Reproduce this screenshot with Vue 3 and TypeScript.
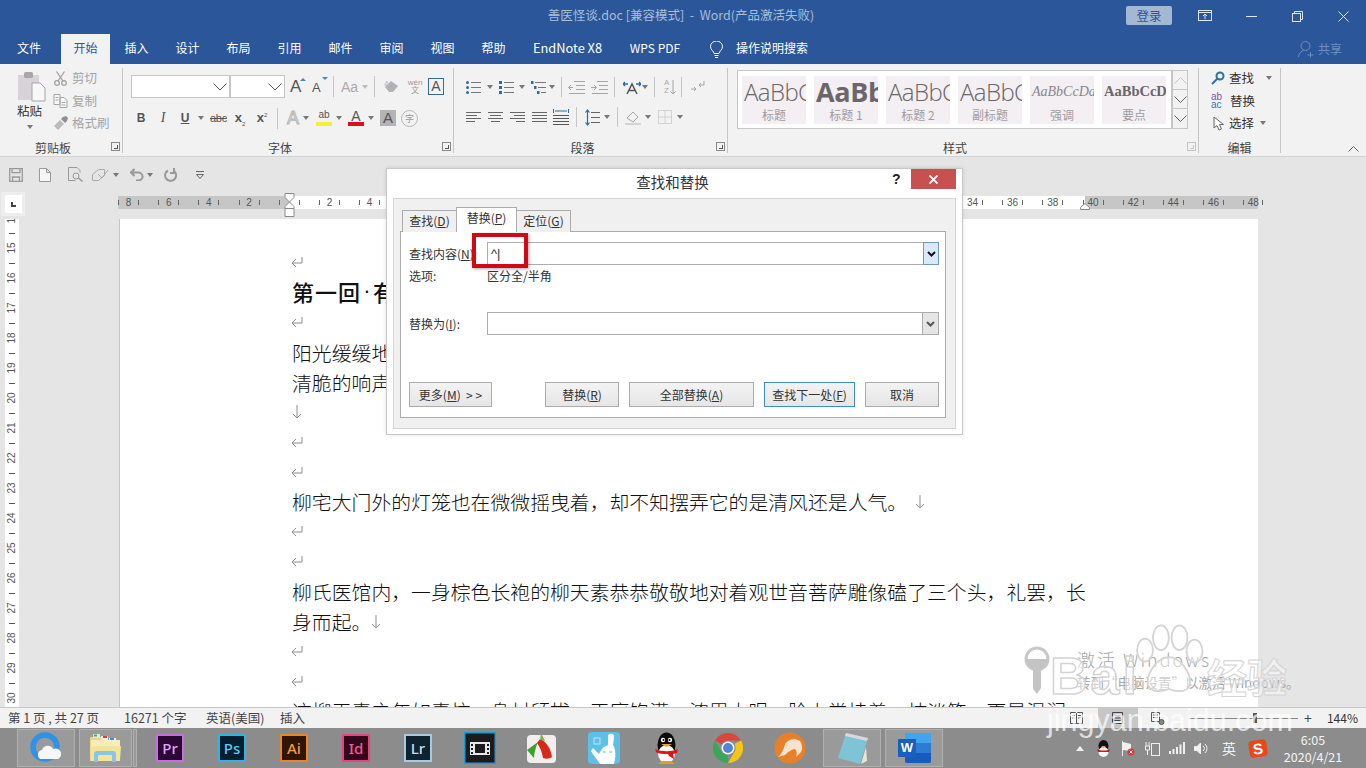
<script setup lang="ts">
const tabs = ['插入', '设计', '布局', '引用', '邮件', '审阅', '视图', '帮助']
const styles = [
  { sample: 'AaBbC', name: '标题', cls: 'sLight' },
  { sample: 'AaBb', name: '标题 1', cls: 'sBold' },
  { sample: 'AaBbC', name: '标题 2', cls: 'sLight' },
  { sample: 'AaBbC', name: '副标题', cls: 'sLight' },
  { sample: 'AaBbCcDd', name: '强调', cls: 'sItalic' },
  { sample: 'AaBbCcD', name: '要点', cls: 'sSerif' },
]
const rulerNums = ['8', '6', '4', '2', '', ...Array.from({ length: 24 }, (_, i) => String((i + 1) * 2))]
const vNums = Array.from({ length: 17 }, (_, i) => String(i + 14))
type Line = { text?: string; mark?: 'ret' | 'down'; bold?: boolean }
const lines: Line[] = [
  { mark: 'ret' },
  { bold: true },
  { mark: 'ret' },
  { text: '阳光缓缓地' },
  { text: '清脆的响声' },
  { mark: 'down' },
  { mark: 'ret' },
  { mark: 'ret' },
  { text: '柳宅大门外的灯笼也在微微摇曳着，却不知摆弄它的是清风还是人气。', mark: 'down' },
  { mark: 'ret' },
  { mark: 'ret' },
  { text: '柳氏医馆内，一身棕色长袍的柳天素恭恭敬敬地对着观世音菩萨雕像磕了三个头，礼罢，长' },
  { text: '身而起。', mark: 'down' },
  { mark: 'ret' },
  { mark: 'ret' },
  { text: '这柳天素之年如素抗，身材颀拔，天庭饱满，浓眉大眼，脸上常挂着一抹淡笑，更是温润' },
]
const tiles = [
  { t: 'Pr', c: 'pr' },
  { t: 'Ps', c: 'ps' },
  { t: 'Ai', c: 'ai' },
  { t: 'Id', c: 'id' },
  { t: 'Lr', c: 'lr' },
]
</script>

<template>
  <div class="app">
    <header class="titlebar">
      <div class="title">善医怪谈.doc [兼容模式]&nbsp; -&nbsp; Word(产品激活失败)</div>
      <div class="login">登录</div>
      <div class="winbtn">
        <svg width="14" height="12" viewBox="0 0 14 12" fill="none" stroke="#dfe7f2"><rect x=".5" y=".5" width="13" height="10" /><path d="M.5 2.500h13M7 9V4.500M5 6l2-2 2 2" /></svg>
      </div>
      <div class="winbtn">
        <svg width="11" height="11" viewBox="0 0 11 11" stroke="#dfe7f2"><path d="M0 5.500h11" /></svg>
      </div>
      <div class="winbtn">
        <svg width="11" height="11" viewBox="0 0 11 11" fill="none" stroke="#dfe7f2"><rect x=".5" y="2.500" width="8" height="8" /><path d="M2.500 2.500v-2h8v8h-2" /></svg>
      </div>
      <div class="winbtn">
        <svg width="11" height="11" viewBox="0 0 11 11" stroke="#dfe7f2"><path d="M.5.5l10 10M10.500.5l-10 10" /></svg>
      </div>
    </header>

    <nav class="tabs">
      <div class="tab tabFile">文件</div>
      <div class="tab tabActive">开始</div>
      <div v-for="t in tabs" :key="t" class="tab">{{ t }}</div>
      <div class="tabText endnote">EndNote X8</div>
      <div class="tabText wps">WPS PDF</div>
      <svg class="bulb" width="13" height="17" viewBox="0 0 13 17" fill="none" stroke="#fff"><path d="M4 12.500c0-2-3.500-3.500-3.500-7a6 5.500 0 0 1 12 0c0 3.500-3.500 5-3.500 7zM4.500 14.500h4M5 16.500h3" /></svg>
      <div class="tabText searchTip">操作说明搜索</div>
      <div class="share">
        <svg width="17" height="17" viewBox="0 0 17 17" fill="none" stroke="#6f8fbd"><circle cx="7.500" cy="5" r="4.500" /><path d="M.5 16c.5-4 3-6 5-6.500M12.500 11v5.500M9.500 14h6" /></svg>
        <span>共享</span>
      </div>
    </nav>

    <section class="ribbon">
      <div class="group gClip">
        <div class="gBody clipBody">
          <div class="paste">
            <svg width="29" height="31" viewBox="0 0 29 31">
              <path d="M1 4h21v25H1z" fill="#d8d3d8" />
              <rect x="7" y="1" width="9" height="6" rx="1.500" fill="#a9a5a9" />
              <path d="M15 12h8l5 5v13H15z" fill="#f8f8f8" stroke="#a5a5a5" />
            </svg>
            <span class="pasteText">粘贴</span>
            <i class="caret caretPaste"></i>
          </div>
          <div class="clipList">
            <div class="clipItem">
              <svg width="14" height="15" viewBox="0 0 14 15" fill="none" stroke="#a0a0a0" stroke-width="1.300"><circle cx="3.500" cy="12" r="2.300" /><circle cx="10.500" cy="12" r="2.300" /><path d="M4.500 10L11 .5M9.500 10L3 .5" /></svg>
              <span>剪切</span>
            </div>
            <div class="clipItem">
              <svg width="14" height="14" viewBox="0 0 14 14" fill="#f8f8f8" stroke="#a5a5a5"><path d="M.5.5h6v10h-6zM6.500 3.500h4l3 3v7h-7z" /><path d="M2 3.500h3M2 6h3M8 8.500h4M8 11h4" /></svg>
              <span>复制</span>
            </div>
            <div class="clipItem">
              <svg width="15" height="14" viewBox="0 0 15 14"><path d="M1 10l6-6 4 4-6 6z" fill="#bdbbbd" /><path d="M8 3l2-2 3-1 2 2-1 3-2 2z" fill="#8f8f8f" /></svg>
              <span>格式刷</span>
            </div>
          </div>
        </div>
        <div class="gLabel">剪贴板</div>
        <i class="launcher"></i>
      </div>

      <div class="group gFont">
        <div class="gBody">
          <div class="fontRow1">
            <div class="combo comboName"><svg width="14" height="8" viewBox="0 0 14 8" fill="none" stroke="#555"><path d="M.5.5L7 7 13.500.5" /></svg></div>
            <div class="combo comboSize"><svg width="14" height="8" viewBox="0 0 14 8" fill="none" stroke="#555"><path d="M.5.5L7 7 13.500.5" /></svg></div>
            <div class="glyphA m5">A<i class="tinyUp"></i></div>
            <div class="glyphA glyphSm m6">A<i class="tinyDown"></i></div>
            <i class="vsep m5"></i>
            <div class="glyphAa">Aa</div><i class="caret caretL"></i>
            <i class="vsep m6"></i>
            <svg class="m9" width="15" height="15" viewBox="0 0 15 15"><path d="M1 8l6-6 7 5-5 6H5z" fill="#b3b1b3" /><text x="0" y="7" font-size="8" fill="#b3c0d0" font-family="Liberation Sans">A</text></svg>
            <div class="wen m8"><span>wén</span><span>文</span></div>
            <div class="boxA m5">A</div>
          </div>
          <div class="fontRow2">
            <span class="fbtn fB">B</span>
            <span class="fbtn fI m6">I</span>
            <span class="fbtn fU m6">U</span>
            <i class="caret m5"></i>
            <span class="fbtn fAbc m6">abc</span>
            <span class="fbtn fX m6">x<sub>2</sub></span>
            <span class="fbtn fX m6">x<sup>2</sup></span>
            <i class="vsep m7"></i>
            <span class="fbtn fOutline m7">A</span>
            <i class="caret m2"></i>
            <span class="fbtn fHigh m7">ab<i></i></span>
            <i class="caret m4"></i>
            <span class="fbtn fRed m6">A<i></i></span>
            <i class="caret m4"></i>
            <span class="fbtn fShade m6">A</span>
            <span class="circleZi m5">字</span>
          </div>
        </div>
        <div class="gLabel">字体</div>
        <i class="launcher"></i>
      </div>

      <div class="group gPara">
        <div class="gBody">
          <div class="paraRow paraRow1">
            <svg width="15" height="15" viewBox="0 0 15 15" stroke="#777"><path d="M5 2.500h10M5 7.500h10M5 12.500h10" /><g fill="#2b6ca8" stroke="none"><circle cx="1.500" cy="2.500" r="1.500" /><circle cx="1.500" cy="7.500" r="1.500" /><circle cx="1.500" cy="12.500" r="1.500" /></g></svg>
            <i class="caret m6"></i>
            <svg class="m6" width="15" height="15" viewBox="0 0 15 15" stroke="#777"><path d="M5 2.500h10M5 7.500h10M5 12.500h10" /><g fill="#2b6ca8" stroke="none"><rect x="0" y="1" width="3" height="3" /><rect x="0" y="6" width="3" height="3" /><rect x="0" y="11" width="3" height="3" /></g></svg>
            <i class="caret m5"></i>
            <svg class="m6" width="15" height="15" viewBox="0 0 15 15" stroke="#777"><path d="M4 2.500h11M7 7.500h8M10 12.500h5" /><g fill="#2b6ca8" stroke="none"><rect x="0" y="1" width="2.500" height="3" /><rect x="3" y="6" width="2.500" height="3" /><rect x="6" y="11" width="2.500" height="3" /></g></svg>
            <i class="caret m3"></i>
            <i class="vsep m6"></i>
            <svg class="m6" width="17" height="13" viewBox="0 0 17 13" fill="none" stroke="#a5a5a5"><path d="M6 .5h11M8 4.500h9M8 8.500h9M1 12.500h16M5 6.500H.5M3 4L.5 6.500 3 9" /></svg>
            <svg class="m6" width="17" height="13" viewBox="0 0 17 13" fill="none" stroke="#a5a5a5"><path d="M6 .5h11M8 4.500h9M8 8.500h9M1 12.500h16M0 6.500h5M3 4l2.500 2.500L3 9" /></svg>
            <i class="vsep m6"></i>
            <svg class="m8" width="18" height="15" viewBox="0 0 18 15" fill="none" stroke="#555"><path d="M4 14L9 4l5 10M6 10.500h6" stroke-width="1.500" /><path d="M0 4h5M2 2L0 4l2 2M18 4h-5M16 2l2 2-2 2" stroke="#2b6ca8" stroke-width="1.300" /></svg>
            <i class="caret m1"></i>
            <i class="vsep m6"></i>
            <div class="azBtn m9"><span>A<br />Z</span><svg width="6" height="15" viewBox="0 0 6 15" fill="none" stroke="#a5a5a5"><path d="M3 0v14M.5 11.500L3 14l2.500-2.500" /></svg></div>
            <i class="vsep m5"></i>
            <svg class="m9" width="14" height="14" viewBox="0 0 14 14" fill="none" stroke="#a5a5a5"><path d="M13 1v4H8M10 3L8 5l2 2M0 9h5M3 7l2 2-2 2" /></svg>
          </div>
          <div class="paraRow paraRow2">
            <svg width="15" height="11" viewBox="0 0 15 11" stroke="#666"><path d="M0 .5h15M0 3.500h11M0 6.500h15M0 9.500h9" /></svg>
            <svg class="m7" width="15" height="11" viewBox="0 0 15 11" stroke="#666"><path d="M0 .5h15M2 3.500h11M0 6.500h15M3 9.500h9" /></svg>
            <svg class="m7" width="15" height="11" viewBox="0 0 15 11" stroke="#666"><path d="M0 .5h15M4 3.500h11M0 6.500h15M6 9.500h9" /></svg>
            <svg class="m7" width="15" height="11" viewBox="0 0 15 11" stroke="#666"><path d="M0 .5h15M0 3.500h15M0 6.500h15M0 9.500h15" /></svg>
            <svg class="m6" width="16" height="16" viewBox="0 0 16 16" fill="none" stroke="#555"><path d="M0 6.500h16M0 9.500h16M0 12.500h16M0 15.500h16" /><path d="M.5 0v4M15.500 0v4M2 2h12" stroke="#2b6ca8" /></svg>
            <i class="vsep m7"></i>
            <svg class="m8" width="15" height="17" viewBox="0 0 15 17" fill="none" stroke="#666"><path d="M6 3.500h9M6 8.500h9M6 13.500h9" /><path d="M2.500 1v15M.5 3.500L2.500 1l2 2.500M.5 13.500l2 2.500 2-2.500" stroke="#2b6ca8" stroke-width="1.200" /></svg>
            <i class="caret m4"></i>
            <i class="vsep m7"></i>
            <svg class="m7" width="16" height="16" viewBox="0 0 16 16"><path d="M2 9l6-6 5 5-5 5z" fill="none" stroke="#a5a5a5" /><path d="M0 14h16v2H0z" fill="#d5d3d5" /></svg>
            <i class="caret m4"></i>
            <svg class="m7" width="14" height="14" viewBox="0 0 14 14" fill="none" stroke="#b5b5b5" stroke-dasharray="1 1"><path d="M.5.5h13v13H.5zM7 .5v13M.5 7h13" /></svg>
            <i class="caret m5"></i>
          </div>
        </div>
        <div class="gLabel">段落</div>
        <i class="launcher"></i>
      </div>

      <div class="group gStyles">
        <div class="gBody stylesBody">
          <div class="gallery">
            <div v-for="s in styles" :key="s.name" class="styleItem">
              <div class="styleSample" :class="s.cls">{{ s.sample }}</div>
              <div class="styleName">{{ s.name }}</div>
            </div>
          </div>
          <div class="scrollBtns">
            <div class="scrollBtn"><svg width="13" height="7" viewBox="0 0 13 7" fill="none" stroke="#c5c5c5"><path d="M.5 6.500l6-6 6 6" /></svg></div>
            <div class="scrollBtn"><svg width="13" height="7" viewBox="0 0 13 7" fill="none" stroke="#666"><path d="M.5.5l6 6 6-6" /></svg></div>
            <div class="scrollBtn scrollLast"><svg width="13" height="7" viewBox="0 0 13 7" fill="none" stroke="#666"><path d="M.5.5l6 6 6-6" /></svg></div>
          </div>
        </div>
        <div class="gLabel">样式</div>
        <i class="launcher launcherDim"></i>
      </div>

      <div class="group gEdit">
        <div class="gBody editBody">
          <div class="editItem">
            <svg width="14" height="14" viewBox="0 0 14 14" fill="none" stroke="#2f6ea8" stroke-width="2"><circle cx="9" cy="5" r="3.500" /><path d="M6.500 7.500L1 13" /></svg>
            <span>查找</span><i class="caret caretFind"></i>
          </div>
          <div class="editItem">
            <div class="abac"><span class="ab">ab</span><span class="ac">ac</span></div>
            <span>替换</span>
          </div>
          <div class="editItem">
            <svg width="14" height="15" viewBox="0 0 14 15" fill="#fff" stroke="#666"><path d="M3 1v11l3-2.500L8 14l2.500-1L8.500 8.500h4z" /></svg>
            <span>选择</span><i class="caret"></i>
          </div>
        </div>
        <div class="gLabel gLabelFree">编辑</div>
      </div>

      <div class="collapse">
        <svg width="11" height="6" viewBox="0 0 11 6" fill="none" stroke="#666"><path d="M.5 5.500l5-5 5 5" /></svg>
      </div>
    </section>

    <main class="work">
      <div class="qat">
        <svg width="14" height="14" viewBox="0 0 14 14" fill="none" stroke="#999" stroke-width="1.300"><path d="M.7.7h12.600v12.600H.7zM3 .7v4h8v-4M3.500 13V9h7v4" /></svg>
        <svg class="q16" width="12" height="14" viewBox="0 0 12 14" fill="#f7f7f7" stroke="#999"><path d="M.5.5h7l4 4v9H.5zM7.500.5v4h4" /></svg>
        <svg class="q17" width="15" height="15" viewBox="0 0 15 15" fill="none" stroke="#999"><path d="M9 .5H.5v13h7M9 .5l3 3v2" /><circle cx="8" cy="9" r="3" /><path d="M10.500 11l4 3.500" stroke-width="1.500" /></svg>
        <svg class="q9" width="17" height="14" viewBox="0 0 17 14" fill="none" stroke="#a8a8a8"><path d="M.5 6.500l6-5h6v6l-6 5h-6z" /><path d="M6 6l4 4 6-8" /></svg>
        <i class="caret m4"></i>
        <svg class="q11" width="14" height="13" viewBox="0 0 14 13" fill="none" stroke="#999" stroke-width="2"><path d="M4.500 1L1 4.500 4.500 8M1 4.500h7a4 3.500 0 0 1 0 8H6" /></svg>
        <i class="caret m3"></i>
        <svg class="q11" width="13" height="14" viewBox="0 0 13 14" fill="none" stroke="#999" stroke-width="2"><path d="M4 2.500a5.500 5.500 0 1 0 6.500 1M10 0v5h-4" /></svg>
        <svg class="q19" width="8" height="8" viewBox="0 0 8 8" stroke="#666" fill="#666"><path d="M0 .5h8" /><path d="M.5 3.500h7L4 7.500z" fill="none" /></svg>
      </div>

      <div class="rulerRow">
        <div class="corner"><i></i></div>
        <div class="hruler">
          <div v-for="(n, i) in rulerNums" :key="i" class="rcell">
            <i class="rtick"></i><span class="rnum">{{ n }}</span><i class="rtick"></i>
          </div>
          <svg class="markL" width="11" height="25" viewBox="0 0 11 25" fill="#fff" stroke="#8a8a8a"><path d="M1 .5h9v4L5.500 9 1 4.500zM5.500 9L10 13.500v2H1v-2zM1 15.500h9v8H1z" /></svg>
          <svg class="markR" width="10" height="7" viewBox="0 0 10 7" fill="#fff" stroke="#8a8a8a"><path d="M5 .5l4.500 4v2h-9v-2z" /></svg>
        </div>
      </div>

      <div class="docRow">
        <div class="vruler">
          <div class="vInner">
            <div v-for="n in vNums" :key="n" class="vcell"><i class="vtick"></i><span class="vnum">{{ n }}</span></div>
          </div>
        </div>
        <div class="page">
          <div v-for="(l, i) in lines" :key="i" class="line" :class="{ lineBold: l.bold }">
            <template v-if="l.bold">第一回<span class="dot">·</span>有</template>
            <span v-if="l.text">{{ l.text }}</span>
            <svg v-if="l.mark === 'ret'" class="retMark" width="12" height="11" viewBox="0 0 12 11" fill="none" stroke="#8e8e8e"><path d="M11 0v6H1M5 2L1 6l4 4" /></svg>
            <svg v-if="l.mark === 'down'" :class="{ downFar: l.text && l.text.length > 20 }" width="10" height="14" viewBox="0 0 10 14" fill="none" stroke="#8e8e8e"><path d="M5 0v13M1 9l4 4 4-4" /></svg>
          </div>
        </div>
      </div>
    </main>

    <footer class="status">
      <span class="sPage">第 1 页 , 共 27 页</span>
      <span class="sWords">16271 个字</span>
      <span class="sLang">英语(美国)</span>
      <span class="sIns">插入</span>
      <div class="sRight">
        <div class="viewBtn"><svg width="13" height="12" viewBox="0 0 13 12" fill="none" stroke="#555"><path d="M.5.5h5l1 1 1-1h5v11h-12zM6.500 1.500v10M2 3.500h3M2 6h3M8 3.500h3M8 6h3" /></svg></div>
        <div class="viewBtn viewOn"><svg width="13" height="12" viewBox="0 0 13 12" fill="none" stroke="#444"><path d="M1.500.5h10v11h-10zM3.500 3.500h6M3.500 6h6M3.500 8.500h6" /></svg></div>
        <div class="viewBtn"><svg width="14" height="13" viewBox="0 0 14 13" fill="none" stroke="#555"><path d="M.5.500h8v9h-8zM2 3h5M2 5.500h5" /><circle cx="10.500" cy="10" r="2.500" fill="#888" /></svg></div>
        <div class="slider">
          <div class="track"><i class="thumb"></i></div>
        </div>
        <span class="zPlus">+</span>
        <span class="zVal">144%</span>
      </div>
    </footer>

    <div class="taskbar">
      <div class="tbBox tbFirst">
        <svg width="32" height="32" viewBox="0 0 32 32">
          <circle cx="15" cy="15" r="12" fill="none" stroke="#2e93e6" stroke-width="5.500" />
          <path d="M10 27a5 5 0 0 1 2-9 6 6 0 0 1 11-1 5 5 0 0 1 5 10z" fill="#f5f7fa" />
        </svg>
      </div>
      <div class="tbBox tbFolder">
        <svg width="33" height="30" viewBox="0 0 33 30">
          <path d="M1 4h12l2 3h16v21H1z" fill="#e9d57f" />
          <path d="M2 7h29v6H2z" fill="#f7edb9" />
          <rect x="4" y="1" width="7" height="4" fill="#e5e5e5" /><rect x="5" y="1.500" width="3" height="2" fill="#4caf50" />
          <rect x="12" y="3" width="7" height="4" fill="#eee" /><rect x="14" y="3" width="4" height="2" fill="#d9402f" />
          <rect x="20" y="5" width="7" height="3" fill="#eee" /><rect x="21" y="5" width="4" height="2" fill="#3b8fd4" />
          <path d="M1 13h31l-1 15H2z" fill="#f3e39b" />
          <path d="M5 29v-8a3 3 0 0 1 3-3h16a3 3 0 0 1 3 3v8h-4v-6a1 1 0 0 0-1-1H10a1 1 0 0 0-1 1v6z" fill="#8cc3e6" />
        </svg>
      </div>
      <i class="tbStack"></i>
      <div v-for="t in tiles" :key="t.t" class="slot"><div class="tile" :class="t.c">{{ t.t }}</div></div>
      <div class="slot">
        <svg width="32" height="32" viewBox="0 0 32 32">
          <rect x=".75" y=".75" width="30.500" height="30.500" fill="#1b1b1d" stroke="#1c9bd6" stroke-width="1.500" />
          <path d="M6 10h20v13H6z" fill="#e8e8e8" />
          <path d="M11 12h10v9H11z" fill="#1b1b1d" />
          <path d="M7 12h2v2H7zM7 16h2v2H7zM7 20h2v2H7zM23 12h2v2h-2zM23 16h2v2h-2zM23 20h2v2h-2z" fill="#1b1b1d" />
        </svg>
      </div>
      <div class="slot">
        <svg width="30" height="31" viewBox="0 0 30 31">
          <rect y="2" width="29" height="28" rx="4" fill="#f2eeee" />
          <path d="M13 6c6 2 11 10 12 18-3 2-6 2-9 1-1-6-3-11-6-15z" fill="#d42a1d" />
          <path d="M11 9L0 17l7 8c0-6 2-11 4-16z" fill="#3ba12b" />
          <path d="M14 0l4 8-5-1z" fill="#7bb04a" />
        </svg>
      </div>
      <div class="slot">
        <svg width="32" height="32" viewBox="0 0 32 32">
          <rect width="32" height="32" rx="4" fill="#5dc0e6" />
          <path d="M20 3c2-2 7-2 6 3l-1 7c3 4 3 12 1 19H12c-3-5-7-9-9-13l2-3 6 6c2-5 5-8 9-9z" fill="#fff" />
          <rect x="6" y="6" width="6" height="6" fill="none" stroke="#bfe6f4" />
          <path d="M15 20h3M21 20h3" stroke="#5dc0e6" />
        </svg>
      </div>
      <div class="slot">
        <svg width="27" height="32" viewBox="0 0 27 32">
          <ellipse cx="13.500" cy="13" rx="9" ry="12.500" fill="#0b0b0b" />
          <ellipse cx="13.500" cy="22" rx="8.500" ry="9" fill="#f7f7f7" />
          <path d="M2 17c7 3 16 3 23 0l-1 4-4 1 1 5-5-3-1-2c-5 0-9 0-12-2z" fill="#d9161d" />
          <circle cx="10" cy="8" r="2.200" fill="#fff" /><circle cx="17" cy="8" r="2.200" fill="#fff" />
          <circle cx="10.500" cy="8" r="1" fill="#000" /><circle cx="16.500" cy="8" r="1" fill="#000" />
          <path d="M8 12h11l-5.500 3z" fill="#f2a51e" />
          <path d="M5 32l4-3h9l4 3z" fill="#e0a020" />
        </svg>
      </div>
      <div class="slot">
        <svg width="30" height="30" viewBox="0 0 30 30">
          <path d="M15 0a15 15 0 0 1 13 7.500H15a7.500 7.500 0 0 0-6.500 3.750L2 7.500A15 15 0 0 1 15 0z" fill="#d8473a" />
          <path d="M28 7.500A15 15 0 0 1 15 30l6.500-11.250A7.500 7.500 0 0 0 21.500 11z" fill="#f5c518" />
          <path d="M15 30A15 15 0 0 1 2 7.500l6.500 11.250A7.500 7.500 0 0 0 15 22.500z" fill="#3aa657" />
          <circle cx="15" cy="15" r="6.500" fill="#fff" /><circle cx="15" cy="15" r="5" fill="#4f86d6" />
        </svg>
      </div>
      <div class="slot">
        <svg width="32" height="32" viewBox="0 0 32 32">
          <circle cx="16" cy="16" r="15.500" fill="#e8802a" />
          <path d="M4 25c3-2 6-8 7-13 3-5 10-6 15-3 2 3 3 8 1 11l-5 5c1-3 1-6-1-8-3 0-7 3-10 6z" fill="#f6e3cf" />
        </svg>
      </div>
      <div class="tbBox tbNote">
        <svg width="31" height="33" viewBox="0 0 31 33">
          <path d="M9 1l22 5-8 26L1 26z" fill="#7fc4d6" />
          <path d="M9 1l22 5-1 3L8 4z" fill="#d9d9d9" />
          <path d="M24 32l5-17 1 14z" fill="#e8e6d9" />
        </svg>
      </div>
      <div class="tbBox tbWord">
        <svg width="34" height="30" viewBox="0 0 34 30">
          <rect x="8" y="0" width="26" height="30" rx="2" fill="#2b7cd3" />
          <path d="M8 0h26v10H8z" fill="#41a5ee" />
          <path d="M8 20h26v8a2 2 0 0 1-2 2H10a2 2 0 0 1-2-2z" fill="#185abd" />
        </svg>
        <span class="wordW">W</span>
      </div>
      <div class="tray">
        <svg class="trayItem" width="24" height="8" viewBox="0 0 24 8"><path d="M8 7l4-5 4 5z" fill="#f0f0f0" /></svg>
        <span class="trayBox">
          <svg width="15" height="17" viewBox="0 0 15 17"><ellipse cx="7.500" cy="6" rx="5" ry="6" fill="#111" /><ellipse cx="7.500" cy="12" rx="5" ry="5" fill="#f5f5f5" /><path d="M1 9c4 2 9 2 13 0l-1 3H2z" fill="#d9161d" /><path d="M5 6h5L7.500 8z" fill="#f2a51e" /></svg>
        </span>
        <span class="trayBox">
          <svg width="14" height="15" viewBox="0 0 14 15"><path d="M1.500 0v15" stroke="#f0f0f0" /><path d="M2 1l8 2v7l-8-1z" fill="#f0f0f0" /><circle cx="10" cy="11" r="3.500" fill="#d33" /><path d="M8.500 9.500l3 3M11.500 9.500l-3 3" stroke="#fff" /></svg>
        </span>
        <span class="trayBox">
          <svg width="15" height="15" viewBox="0 0 15 15" fill="none" stroke="#f0f0f0"><rect x="6.500" y="2.500" width="8" height="12" /><path d="M1 1v4M4 1v4M.5 5h4v4h-4zM2.500 9v5" /></svg>
        </span>
        <span class="trayBox">
          <svg width="16" height="12" viewBox="0 0 16 12" fill="#f0f0f0"><rect y="9" width="2" height="3" /><rect x="3.500" y="7" width="2" height="5" /><rect x="7" y="5" width="2" height="7" /><rect x="10.500" y="2.500" width="2" height="9.500" /><rect x="14" y="0" width="2" height="12" /></svg>
        </span>
        <span class="trayBox">
          <svg width="15" height="13" viewBox="0 0 15 13" fill="none" stroke="#f0f0f0"><path d="M.5 4.500h2.500l3.500-3.500v11L3 8.500H.5z" fill="#f0f0f0" /><path d="M9 4a3 3 0 0 1 0 5M11 2a6 6 0 0 1 0 9" /></svg>
        </span>
        <span class="trayLang">英</span>
        <span class="trayS">S</span>
        <div class="clock"><div>6:05</div><div>2020/4/21</div></div>
      </div>
    </div>

    <!-- 对话框及水印叠放在内容之上 -->
    <div class="dialog">
      <div class="dlgTitle">
        <span class="dlgName">查找和替换</span>
        <span class="dlgHelp">?</span>
        <div class="dlgClose"><svg width="9" height="9" viewBox="0 0 9 9" stroke="#fff" stroke-width="1.800"><path d="M.5.5l8 8M8.500.5l-8 8" /></svg></div>
      </div>
      <div class="dlgPanel">
        <div class="dlgTabs">
          <div class="dTab">查找(<u>D</u>)</div>
          <div class="dTab dTabOn">替换(<u>P</u>)</div>
          <div class="dTab">定位(<u>G</u>)</div>
        </div>
        <div class="dlgPane">
          <div class="fRow">
            <label>查找内容(<u>N</u>):</label>
            <div class="fInput"><span class="fVal">^|</span><div class="fDrop fDropOn"><svg width="9" height="6" viewBox="0 0 9 6" fill="none" stroke="#111" stroke-width="2"><path d="M1 1l3.500 3.500L8 1" /></svg></div></div>
          </div>
          <div class="fRow fOpts">
            <label>选项:</label>
            <span>区分全/半角</span>
          </div>
          <div class="fRow fReplace">
            <label>替换为(<u>I</u>):</label>
            <div class="fInput"><span class="fVal"></span><div class="fDrop"><svg width="9" height="6" viewBox="0 0 9 6" fill="none" stroke="#555" stroke-width="2"><path d="M1 1l3.500 3.500L8 1" /></svg></div></div>
          </div>
          <div class="dBtns">
            <button class="dBtn bMore">更多(<u>M</u>) &nbsp;&gt; &gt;</button>
            <button class="dBtn bRep">替换(<u>R</u>)</button>
            <button class="dBtn bAll">全部替换(<u>A</u>)</button>
            <button class="dBtn bNext">查找下一处(<u>F</u>)</button>
            <button class="dBtn bCancel">取消</button>
          </div>
        </div>
      </div>
    </div>
    <div class="redBox"></div>

    <div class="wmActivate">
      <div class="wmA1">激活 Windows</div>
      <div class="wmA2">转到“电脑设置”以激活 Windows。</div>
    </div>
    <svg class="wmKey" width="28" height="50" viewBox="0 0 28 50">
      <circle cx="13" cy="13" r="11" fill="none" stroke="#c8c8c8" stroke-width="3" />
      <path d="M2 13a11 11 0 0 0 22 0z" fill="#c4c4c4" />
      <path d="M9 22h8v20l-4 6-4-5z" fill="#c4c4c4" />
    </svg>
    <div class="wmBaidu">Bai</div>
    <svg class="wmPaw" width="76" height="78" viewBox="0 0 86 80" fill="#fff" stroke="#d4d4d4" stroke-width="2" fill-opacity=".45">
      <ellipse cx="17" cy="30" rx="9" ry="13" />
      <ellipse cx="35" cy="16" rx="9" ry="14" />
      <ellipse cx="56" cy="16" rx="9" ry="14" />
      <ellipse cx="73" cy="31" rx="9" ry="13" />
      <path d="M44 38c12 0 24 16 24 28 0 12-14 12-24 8-10 4-24 4-24-8 0-12 12-28 24-28z" />
    </svg>
    <div class="wmJing">经验</div>
    <div class="wmUrl">jingyan.baidu.com</div>
  </div>
</template>

<style>
html, body { margin: 0; padding: 0; background: #e6e5e6; }
</style>

<style scoped>
.app {
  position: relative; width: 1366px; height: 768px; overflow: hidden;
  display: flex; flex-direction: column; background: #e6e5e6; color: #333;
  font-family: "Noto Sans CJK SC", "Liberation Sans", sans-serif; font-size: 12px; line-height: 16px;
}
i { display: block; font-style: normal; flex: none; }
svg { display: block; flex: none; }
.m1 { margin-left: 1px; } .m2 { margin-left: 2px; } .m3 { margin-left: 3px; } .m4 { margin-left: 4px; }
.m5 { margin-left: 5px; } .m6 { margin-left: 6px; } .m7 { margin-left: 7px; } .m8 { margin-left: 8px; } .m9 { margin-left: 9px; }
.caret { width: 0; height: 0; border: 3.500px solid transparent; border-top: 4px solid #777; border-bottom: 0; }

.titlebar { height: 32px; background: #2b579a; display: flex; align-items: center; flex: none; }
.title { flex: 1; padding: 0 0 2px 236px; text-align: center; color: #a9bdd9; font-size: 12.500px; }
.login { width: 46px; height: 19px; margin-top: -1px; margin-right: 10px; background: #a5b8d3; color: #2b579a; text-align: center; line-height: 19px; border-radius: 2px; font-size: 12.500px; }
.winbtn { width: 46px; display: flex; justify-content: center; }

.tabs { height: 32px; background: #2b579a; display: flex; align-items: flex-end; padding-left: 4px; flex: none; color: #fff; }
.tab { width: 51px; height: 30px; line-height: 28px; text-align: center; flex: none; }
.tabFile { width: 50px; margin-right: 6px; }
.tabActive { width: 49px; margin: 0 1px; background: #f3f2f3; color: #2b579a; }
.tabText { height: 30px; line-height: 28px; flex: none; white-space: nowrap; text-align: center; }
.endnote { width: 71px; margin-left: 13px; font-size: 12.800px; }
.wps { width: 52px; margin-left: 26px; }
.bulb { margin-left: 29px; margin-bottom: 6px; }
.searchTip { margin-left: 13px; }
.share { margin-left: auto; margin-right: 24px; display: flex; align-items: center; gap: 3px; height: 30px; color: #6f8fbd; }

.ribbon { height: 93px; background: #f3f2f3; display: flex; flex: none; border-bottom: 1px solid #d4d3d4; box-sizing: border-box; }
.group { position: relative; display: flex; flex-direction: column; box-sizing: border-box; flex: none; margin-top: 4px; height: 85px; border-right: 1px solid #c6c6c6; }
.gBody { flex: 1; min-height: 0; }
.gLabel { height: 16px; line-height: 16px; text-align: center; color: #444; margin-bottom: -3px; padding-right: 16px; }
.gLabelFree { padding-right: 0; }
.launcher { position: absolute; right: 2px; bottom: 2px; width: 7px; height: 7px; border: 1px solid #888; }
.launcher::after { content: ""; display: block; width: 3px; height: 3px; margin: 2px; border-right: 1px solid #555; border-bottom: 1px solid #555; }
.launcherDim { border-color: #c5c5c5; }
.launcherDim::after { border-color: #c5c5c5; }
.gClip { width: 123px; }
.gFont { width: 331px; }
.gPara { width: 274px; }
.gStyles { width: 471px; }
.gEdit { width: 82px; }

.clipBody { display: flex; padding-left: 16px; }
.paste { width: 30px; display: flex; flex-direction: column; align-items: center; padding-top: 3px; }
.pasteText { margin-top: -1px; line-height: 20px; color: #333; font-size: 12.500px; margin-right: 3px; }
.caretPaste { margin-top: 4px; margin-right: 3px; }
.clipList { margin-left: 7px; margin-top: -1px; }
.clipItem { height: 22.500px; display: flex; align-items: center; gap: 4px; color: #a3a3a3; width: 68px; font-size: 12.500px; }
.clipItem svg { width: 15px; }

.fontRow1 { display: flex; align-items: center; padding: 7px 0 0 8px; height: 23px; }
.combo { height: 23px; box-sizing: border-box; background: #fff; border: 1px solid #c6c6c6; display: flex; align-items: center; justify-content: flex-end; padding-right: 2px; flex: none; }
.comboName { width: 99px; }
.comboSize { width: 55px; margin-left: 0; }
.glyphA { position: relative; width: 16px; font: 17px/17px "Liberation Sans", sans-serif; color: #555; }
.glyphSm { font-size: 13px; padding-top: 2px; }
.tinyUp { position: absolute; right: 0; top: 0; border: 3px solid transparent; border-bottom: 3px solid #4c86b8; border-top: 0; }
.tinyDown { position: absolute; right: 0; top: 0; border: 3px solid transparent; border-top: 3px solid #4c86b8; border-bottom: 0; }
.vsep { width: 1px; height: 21px; background: #c6c6c6; }
.glyphAa { width: 20px; margin-left: 7px; color: #aaa; font: 14px/16px "Liberation Sans", sans-serif; }
.caretL { margin-left: 1px; border-top-color: #bbb; }
.wen { width: 16px; display: flex; flex-direction: column; align-items: center; color: #999; font: 8px/8px "Liberation Sans", "Noto Sans CJK SC", sans-serif; }
.boxA { width: 14px; height: 15px; border: 1px solid #336a99; color: #555; font: 14px/15px "Liberation Sans", sans-serif; text-align: center; flex: none; }
.fontRow2 { display: flex; align-items: center; height: 22px; margin-top: 9px; padding-left: 10px; }
.fbtn { position: relative; width: 16px; flex: none; text-align: center; color: #555; font: 12px/18px "Liberation Sans", sans-serif; }
.fB { font-weight: bold; }
.fI { font-family: "Liberation Serif", serif; font-style: italic; font-size: 14px; }
.fU { text-decoration: underline; font-weight: bold; }
.fAbc { font-size: 11px; text-decoration: line-through; letter-spacing: -.3px; }
.fX { font-weight: bold; font-size: 13px; }
.fX sub, .fX sup { font-size: 6px; font-weight: normal; line-height: 0; }
.fOutline { font-size: 18px; color: #eee; -webkit-text-stroke: 1px #b5b5b5; }
.fHigh { font-size: 10px; line-height: 12px; height: 18px; }
.fHigh i { position: absolute; left: 0; right: 0; bottom: 1px; height: 4px; background: #f6ef3a; }
.fRed { font-size: 14px; line-height: 14px; height: 18px; }
.fRed i { position: absolute; left: 0; right: 0; bottom: 1px; height: 4px; background: #e01019; }
.fShade { height: 16px; line-height: 16px; background: #b5b3b5; font-size: 15px; }
.circleZi { width: 15px; height: 15px; border: 1px solid #b5b5b5; border-radius: 50%; font-size: 9px; line-height: 15px; text-align: center; color: #999; flex: none; }

.paraRow { display: flex; align-items: center; }
.paraRow1 { height: 22px; padding: 8px 0 0 12px; }
.paraRow1 .vsep, .paraRow2 .vsep { height: 20px; }
.paraRow2 { height: 22px; margin-top: 8px; padding-left: 12px; }
.azBtn { display: flex; align-items: center; gap: 1px; color: #aaa; font: 8px/8px "Liberation Sans", sans-serif; }

.stylesBody { display: flex; padding: 2px 0 0 9px; }
.gallery { width: 435px; height: 59px; box-sizing: border-box; background: #fff; border: 1px solid #c6c6c6; padding: 5px 4px; display: flex; gap: 8px; }
.styleItem { width: 64px; height: 48px; background: #f3eff3; overflow: hidden; flex: none; text-align: center; }
.styleSample { height: 31px; white-space: nowrap; color: #6a666a; overflow: hidden; padding-left: 2px; text-align: left; }
.sLight { font: 300 24px/31px "Open Sans", sans-serif; letter-spacing: -.6px; }
.sBold { font: bold 27px/31px "Open Sans", sans-serif; letter-spacing: -.4px; }
.sItalic { font: italic 14px/31px "Liberation Serif", serif; color: #8a868a; }
.sSerif { font: bold 14.500px/31px "Liberation Serif", serif; }
.styleName { color: #a09ca0; line-height: 16px; }
.scrollBtns { width: 16px; display: flex; flex-direction: column; }
.scrollBtn { height: 20px; box-sizing: border-box; border: 1px solid #c6c6c6; border-left-width: 1px; display: flex; align-items: center; justify-content: center; flex: none; margin-bottom: -1px; }
.scrollLast { height: 21px; }

.editBody { padding: 0 0 0 12px; margin-top: -1px; }
.editItem { height: 22.500px; display: flex; align-items: center; color: #333; gap: 4px; font-size: 12.500px; }
.editItem svg { width: 14px; }
.editItem .caret { margin-left: 2px; }
.editItem .caretFind { margin-left: 8px; }
.abac { width: 15px; color: #3a7ca8; font: 10px/8px "Liberation Sans", sans-serif; display: flex; flex-direction: column; margin-right: 0; }
.ab { color: #8a4fa8; }
.ac { color: #2b7ca8; }
.collapse { margin-left: auto; margin-right: 7px; align-self: flex-end; padding-bottom: 4px; }

.work { flex: 1; min-height: 0; display: flex; flex-direction: column; overflow: hidden; }
.qat { height: 35px; flex: none; display: flex; align-items: center; padding-left: 9px; box-sizing: border-box; }
.q16 { margin-left: 16px; } .q17 { margin-left: 17px; } .q9 { margin-left: 9px; } .q11 { margin-left: 11px; } .q19 { margin-left: 19px; }
.rulerRow { height: 25px; flex: none; display: flex; }
.corner { width: 24px; height: 24px; margin-left: 1px; background: #efeeef; display: flex; align-items: center; justify-content: center; flex: none; }
.corner i { width: 17px; height: 18px; background: #fff; position: relative; }
.corner i::after { content: ""; position: absolute; left: 6px; top: 7px; width: 5px; height: 5px; border-left: 2px solid #444; border-bottom: 2px solid #444; box-sizing: border-box; }
.hruler {
  position: relative; width: 1140px; height: 13px; margin: 4px 0 0 93px; display: flex; overflow: visible;
  background: linear-gradient(to right, #c6c6c6 172px, #fff 172px, #fff 967px, #c6c6c6 967px);
}
.rcell { width: 40.200px; height: 13px; display: flex; align-items: center; flex: none; color: #555; font: 10px/13px "Liberation Sans", sans-serif; }
.rcell:last-of-type { width: 20px; }
.rtick { width: 1px; height: 5px; background: #666; }
.rnum { width: 19px; text-align: center; }
.markL { position: absolute; left: 166px; top: -3px; }
.markR { position: absolute; left: 962px; top: 7px; }

.docRow { flex: 1; min-height: 0; display: flex; overflow: hidden; padding-top: 2px; }
.vruler { width: 14px; margin-left: 5px; background: #fff; overflow: hidden; flex: none; }
.vInner { margin-top: -16px; }
.vcell { height: 30px; position: relative; display: flex; align-items: center; justify-content: center; }
.vtick { position: absolute; left: 4px; top: 0; width: 6px; height: 1px; background: #555; }
.vnum { transform: rotate(-90deg); color: #555; font: 10px/12px "Liberation Sans", sans-serif; }
.page { width: 1139px; margin-left: 100px; box-sizing: border-box; border-left: 1px solid #c6c6c6; background: #fff; padding: 29px 0 0 172px; overflow: hidden; flex: none; color: #111; }
.line { height: 29.900px; line-height: 30px; display: flex; align-items: center; font-size: 19.850px; font-weight: 300; white-space: nowrap; }
.lineBold { box-sizing: border-box; padding-bottom: 3px; font-size: 22px; letter-spacing: 1px; font-weight: 500; }
.dot { font-family: "Liberation Sans", sans-serif; width: 12px; text-align: center; letter-spacing: 0; }
.retMark { margin-left: -1px; }
.downFar { margin-left: 8px; }

.status { height: 21px; flex: none; background: #f3f2f3; border-top: 1px solid #c9c8c9; box-sizing: border-box; display: flex; align-items: center; color: #444; font-size: 12.500px; }
.sPage { margin-left: 8px; width: 116px; flex: none; }
.sWords { width: 82px; flex: none; }
.sLang { width: 74px; flex: none; }
.sIns { flex: none; }
.sRight { margin-left: auto; display: flex; align-items: center; height: 100%; }
.viewBtn { width: 40px; height: 100%; display: flex; align-items: center; justify-content: center; }
.viewBtn:first-child { margin-right: 1px; }
.viewOn { background: #c6c6c6; margin-right: 0; }
.slider { width: 111px; margin-left: 11px; display: flex; align-items: center; }
.track { width: 109px; height: 1px; background: #888; position: relative; }
.thumb { position: absolute; left: 64px; top: -5px; width: 4px; height: 10px; background: #555; }
.zPlus { margin-left: 2px; width: 12px; text-align: center; font-size: 14px; }
.zVal { margin-left: 13px; margin-right: 8px; color: #333; font-size: 12px; }

.taskbar { height: 40px; flex: none; background: #8c8c8c; display: flex; align-items: center; padding-left: 17px; }
.tbBox { height: 38px; box-sizing: border-box; background: #9a9a9a; border: 1px solid #b0b0b0; display: flex; align-items: center; justify-content: center; flex: none; position: relative; }
.tbFirst { width: 58px; }
.tbFolder { width: 53px; margin-left: 4px; }
.tbStack { width: 4px; height: 38px; box-sizing: border-box; background: #9a9a9a; border: 1px solid #b0b0b0; margin-left: 1px; margin-right: 2px; }
.slot { width: 62px; display: flex; justify-content: center; flex: none; }
.tile { width: 28px; height: 28px; box-sizing: border-box; border: 2px solid; display: flex; align-items: center; justify-content: center; font: 500 15px/20px "Noto Sans", sans-serif; }
.pr { background: #2a0a34; border-color: #c86ee0; color: #e3a3f5; }
.ps { background: #061e2e; border-color: #2fb4e6; color: #5dcdf5; }
.ai { background: #2f1503; border-color: #ee8226; color: #f79a3e; }
.id { background: #33071b; border-color: #e6447e; color: #f25a92; }
.lr { background: #0e2230; border-color: #a9c9e2; color: #c7dff0; }
.tbNote { width: 58px; margin-left: 2px; }
.tbWord { width: 58px; margin-left: 4px; }
.wordW { position: absolute; left: 12px; top: 9px; width: 18px; height: 18px; background: #1a5fb8; color: #fff; font: bold 13px/18px "Liberation Sans", sans-serif; text-align: center; }
.tray { margin-left: auto; display: flex; align-items: center; color: #f0f0f0; padding-right: 14px; }
.trayItem { width: 24px; }
.trayBox { width: 24.500px; display: flex; justify-content: center; flex: none; }
.trayLang { width: 24px; margin-left: 3px; text-align: center; font-size: 14px; }
.trayS { width: 18px; height: 17px; margin-left: 8px; border-radius: 4px; background: #e8481c; color: #fff; font: bold 15px/17px "Liberation Sans", sans-serif; text-align: center; flex: none; transform: rotate(-8deg); }
.clock { width: 78px; margin-left: 7px; text-align: center; font-size: 12.500px; line-height: 17px; color: #f5f5f5; }

.dialog { position: absolute; left: 386px; top: 168px; width: 577px; height: 267px; box-sizing: border-box; background: #fff; border: 1px solid #c8c8c8; box-shadow: 0 0 4px rgba(0, 0, 0, .12); color: #333; display: flex; flex-direction: column; }
.dlgTitle { height: 29px; flex: none; display: flex; align-items: center; position: relative; }
.dlgName { flex: 1; text-align: center; font-size: 14.500px; color: #333; padding: 0 4px 3px 0; box-sizing: border-box; }
.dlgHelp { position: absolute; left: 505px; top: 1px; font: bold 14px/18px "Liberation Sans", sans-serif; color: #222; }
.dlgClose { position: absolute; left: 524px; top: 0; width: 45px; height: 20px; background: #c75050; display: flex; align-items: center; justify-content: center; }
.dlgPanel { margin: 0 6px 6px 6px; flex: 1; background: #f0f0f0; border: 1px solid #d4d4d4; padding: 10px 9px 10px 6px; display: flex; flex-direction: column; position: relative; }
.dlgTabs { display: flex; height: 23px; padding-left: 2px; flex: none; margin-bottom: -1px; position: relative; z-index: 1; align-items: flex-end; }
.dTab { height: 22px; box-sizing: border-box; width: 55px; border: 1px solid #acacac; border-bottom: 0; background: #f0f0f0; text-align: center; line-height: 19px; }
.dTabOn { width: 61px; height: 25px; background: #fff; margin: 0 -1px; z-index: 1; position: relative; padding-bottom: 2px; }
.dlgPane { flex: 1; background: #fff; border: 1px solid #acacac; padding: 10px 6px 10px 8px; display: flex; flex-direction: column; }
.fRow { display: grid; grid-template-columns: 78px 1fr; align-items: center; height: 23px; }
.fOpts { height: 20px; margin-top: 1px; }
.fReplace { margin-top: 26px; }
.fInput { height: 23px; box-sizing: border-box; border: 1px solid #acacac; display: flex; align-items: center; justify-content: space-between; background: #fff; }
.fVal { padding-left: 3px; font: 13px/16px "Liberation Sans", sans-serif; }
.fDrop { width: 16px; height: 21px; background: #e5e5e5; border-left: 1px solid #acacac; display: flex; align-items: center; justify-content: center; box-sizing: border-box; }
.fDropOn { background: #d8eafa; border: 1px solid #6f9ac0; height: 23px; margin: 0 -1px 0 0; }
.dBtns { display: flex; margin-top: 47px; }
.dBtn { height: 25px; box-sizing: border-box; border: 1px solid #acacac; background: linear-gradient(#f3f3f3, #e6e6e6); font: inherit; color: #333; padding: 0; text-align: center; flex: none; line-height: 22px; }
.bMore { width: 83px; }
.bRep { width: 74px; margin-left: 53px; }
.bAll { width: 125px; margin-left: 10px; }
.bNext { width: 91px; margin-left: 10px; border-color: #3c8fc4; }
.bCancel { width: 74px; margin-left: 10px; }
.redBox { position: absolute; left: 472px; top: 233px; width: 56px; height: 35px; box-sizing: border-box; border: 4px solid #cf0a14; box-shadow: 1px 1px 3px rgba(0, 0, 0, .35); }

.wmActivate { position: absolute; left: 1077px; top: 647px; color: #a8a8a8; white-space: nowrap; }
.wmA1 { font-size: 18px; line-height: 24px; font-weight: 300; letter-spacing: 2px; }
.wmA2 { font-size: 13.500px; line-height: 20px; margin-top: 1px; }
.wmKey { position: absolute; left: 1024px; top: 646px; }
.wmBaidu { position: absolute; left: 1050px; top: 650px; font: bold 52px/52px "Liberation Sans", sans-serif; color: rgba(255, 255, 255, .45); -webkit-text-stroke: 1.500px #d4d4d4; letter-spacing: 3px; }
.wmPaw { position: absolute; left: 1130px; top: 620px; }
.wmJing { position: absolute; left: 1207px; top: 654px; font-size: 40px; line-height: 44px; font-weight: 700; color: rgba(255, 255, 255, .45); -webkit-text-stroke: 1px #d4d4d4; }
.wmUrl { position: absolute; left: 1047px; top: 702px; font: 30.500px/36px "Liberation Sans", sans-serif; color: rgba(255, 255, 255, .72); white-space: nowrap; }
</style>
